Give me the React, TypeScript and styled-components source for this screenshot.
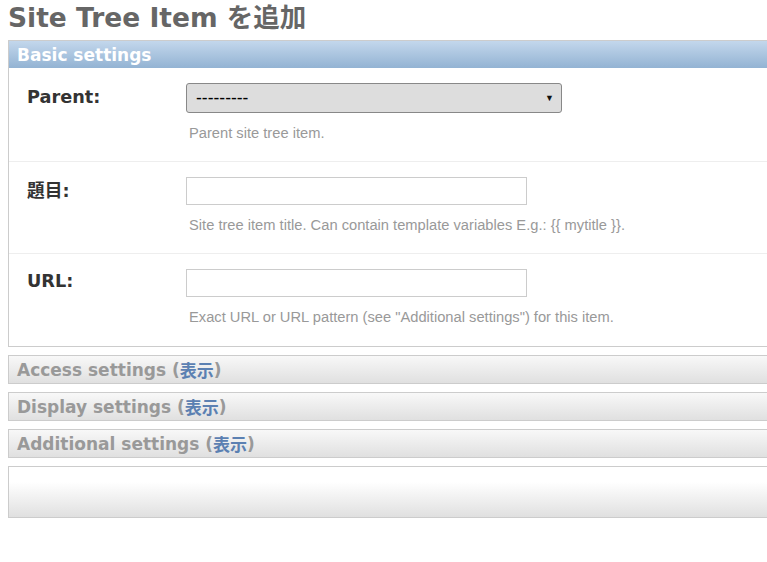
import React from 'react';
import styled, { createGlobalStyle } from 'styled-components';

const GlobalStyle = createGlobalStyle`
  html, body {
    margin: 0;
    padding: 0;
    overflow: hidden;
    background: #fff;
  }
`;

const Page = styled.div`
  width: 1000px;
  padding: 0 0 0 8px;
  font-family: 'DejaVu Sans', 'Noto Sans CJK JP', sans-serif;
`;

const Title = styled.h1`
  margin: 0;
  padding: 3px 0 0;
  height: 37px;
  font-size: 26.5px;
  line-height: 30px;
  font-weight: bold;
  color: #666;
`;

const Fieldset = styled.section`
  border: 1px solid #ccc;
  border-right: none;
  margin-bottom: 8px;
`;

const Legend = styled.h2`
  margin: 0;
  height: 27px;
  padding: 0 8px;
  display: flex;
  align-items: center;
  font-size: 17px;
  font-weight: bold;
  color: #fff;
  background: linear-gradient(#c3d7ec, #93b3d3);
`;

const Row = styled.div<{ $last?: boolean }>`
  display: flex;
  padding: 15px 18px ${(p) => (p.$last ? 20 : 19)}px;
  border-bottom: ${(p) => (p.$last ? 'none' : '1px solid #eee')};
`;

const Label = styled.label<{ $h: number }>`
  width: 159px;
  flex-shrink: 0;
  height: ${(p) => p.$h}px;
  display: flex;
  align-items: center;
  font-size: 17.7px;
  font-weight: bold;
  color: #333;
`;

const Field = styled.div`
  display: flex;
  flex-direction: column;
`;

const SelectBox = styled.div`
  width: 376px;
  height: 30px;
  box-sizing: border-box;
  border: 1px solid #888;
  border-radius: 3px;
  background: #dddddd;
  display: flex;
  align-items: center;
  justify-content: space-between;
  padding: 0 7px 0 9px;
  font-family: 'Liberation Sans', Arial, sans-serif;
  font-size: 17.5px;
  color: #000;
`;

const Arrow = styled.span`
  font-size: 9px;
  color: #111;
`;

const TextInput = styled.input`
  width: 341px;
  height: 28px;
  box-sizing: border-box;
  border: 1px solid #ccc;
  margin: 0;
  padding: 2px 4px;
  font-size: 14px;
  outline: none;
`;

const Help = styled.p`
  margin: 12px 0 0 3px;
  height: 17px;
  font-family: 'Liberation Sans', Arial, sans-serif;
  font-size: 14.7px;
  line-height: 17px;
  color: #999;
`;

const Collapsed = styled.section`
  height: 27px;
  border: 1px solid #ccc;
  border-right: none;
  margin-bottom: 8px;
  background: linear-gradient(#f8f8f8, #e0e0e0);
  display: flex;
  align-items: center;
  padding: 0 8px;
  font-size: 17px;
  font-weight: bold;
  color: #999;
`;

const Toggle = styled.a`
  color: #5b80b2;
  text-decoration: none;
`;

const SubmitRow = styled.div`
  height: 50px;
  border: 1px solid #ccc;
  border-right: none;
  background: linear-gradient(#ffffff 30%, #e0e0e0);
`;

const collapsed = ['Access settings', 'Display settings', 'Additional settings'];

const App: React.FC = () => {
  return (
    <Page>
      <GlobalStyle />
      <Title>Site Tree Item を追加</Title>
      <Fieldset>
        <Legend>Basic settings</Legend>
        <Row>
          <Label $h={28}>Parent:</Label>
          <Field>
            <SelectBox>
              <span>---------</span>
              <Arrow>▼</Arrow>
            </SelectBox>
            <Help>Parent site tree item.</Help>
          </Field>
        </Row>
        <Row>
          <Label $h={24}>題目:</Label>
          <Field>
            <TextInput type="text" />
            <Help>Site tree item title. Can contain template variables E.g.: {'{{ mytitle }}'}.</Help>
          </Field>
        </Row>
        <Row $last>
          <Label $h={24}>URL:</Label>
          <Field>
            <TextInput type="text" />
            <Help>Exact URL or URL pattern (see "Additional settings") for this item.</Help>
          </Field>
        </Row>
      </Fieldset>
      {collapsed.map((name) => (
        <Collapsed key={name}>
          {name} (<Toggle href="#">表示</Toggle>)
        </Collapsed>
      ))}
      <SubmitRow />
    </Page>
  );
};

export default App;
